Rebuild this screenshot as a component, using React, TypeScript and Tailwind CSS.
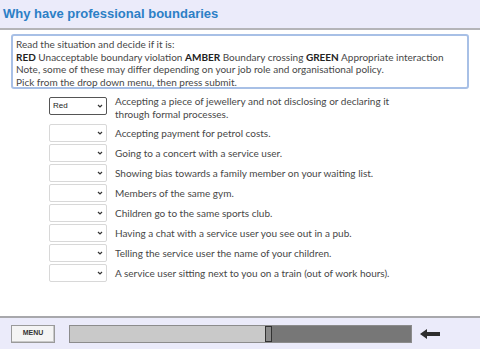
import React from 'react';

const situations = [
  'Accepting payment for petrol costs.',
  'Going to a concert with a service user.',
  'Showing bias towards a family member on your waiting list.',
  'Members of the same gym.',
  'Children go to the same sports club.',
  'Having a chat with a service user you see out in a pub.',
  'Telling the service user the name of your children.',
  'A service user sitting next to you on a train (out of work hours).',
];

const Chevron = () => (
  <svg width="6" height="4" viewBox="0 0 6 4" className="shrink-0">
    <path d="M1 1 L3 3 L5 1" stroke="#333" strokeWidth="1.2" fill="none" />
  </svg>
);

const DropBox: React.FC<{ value?: string }> = ({ value }) => (
  <div
    className={`w-[58px] h-[18px] shrink-0 flex items-center justify-between pl-[3px] pr-[3px] bg-white rounded-[2px] border ${
      value ? 'border-[#555]' : 'border-[#d8d8d8]'
    }`}
  >
    <span className="text-[8px] text-[#222] font-['Liberation_Sans',sans-serif]">{value}</span>
    <Chevron />
  </div>
);

export default function App() {
  return (
    <div className="w-[480px] h-[349px] bg-white flex flex-col overflow-hidden font-['Lato',sans-serif] text-[#474747]">
      {/* Header */}
      <div className="h-[30px] bg-[#ebebfa] border-b-2 border-[#b4b4b8] flex items-center pl-[3px] shrink-0">
        <h1 className="text-[13px] font-bold text-[#2c7fc6] font-['Liberation_Sans',sans-serif]">
          Why have professional boundaries
        </h1>
      </div>

      {/* Instructions */}
      <div className="mx-[11px] mt-[4px] h-[55px] border-2 border-[#a8c0e6] rounded-[3px] px-[3px] pt-[2px] text-[10px] leading-[12.5px]">
        <p>Read the situation and decide if it is:</p>
        <p>
          <b className="text-[#222]">RED</b> Unacceptable boundary violation <b className="text-[#222]">AMBER</b> Boundary crossing{' '}
          <b className="text-[#222]">GREEN</b> Appropriate interaction
        </p>
        <p>Note, some of these may differ depending on your job role and organisational policy.</p>
        <p>Pick from the drop down menu, then press submit.</p>
      </div>

      {/* Rows */}
      <div className="pl-[49px] pt-[8px] flex flex-col gap-[2px] text-[10px]">
        <div className="flex items-start gap-[8px] h-[25px]">
          <DropBox value="Red" />
          <p className="leading-[12.5px] -mt-[2px]">
            Accepting a piece of jewellery and not disclosing or declaring it
            <br />
            through formal processes.
          </p>
        </div>
        {situations.map((s) => (
          <div key={s} className="flex items-center gap-[8px] h-[18px]">
            <DropBox />
            <p>{s}</p>
          </div>
        ))}
      </div>

      <div className="flex-1" />

      {/* Footer */}
      <div className="h-[33px] bg-[#ebebfa] border-t-2 border-[#a8a8ac] flex items-center pl-[11px] shrink-0">
        <button className="w-[44px] h-[18px] bg-[#f4f4f4] border border-[#9a9a9a] shadow-[inset_-1px_-1px_0_#c8c8c8] text-[7px] font-bold text-[#333] font-['Liberation_Sans',sans-serif] flex items-center justify-center">
          MENU
        </button>
        <div className="ml-[14px] w-[343px] h-[18px] flex border border-[#8c8c8c]">
          <div className="w-[195px] bg-[#c9c9c9]" />
          <div className="w-[7px] bg-[#8a8a8a] border border-[#333]" />
          <div className="flex-1 bg-[#777777]" />
        </div>
        <svg width="20" height="10" viewBox="0 0 20 10" className="ml-[8px]">
          <path d="M0 5 L7 0 L7 3 L20 3 L20 7 L7 7 L7 10 Z" fill="#2e2e2e" />
        </svg>
      </div>
    </div>
  );
}
